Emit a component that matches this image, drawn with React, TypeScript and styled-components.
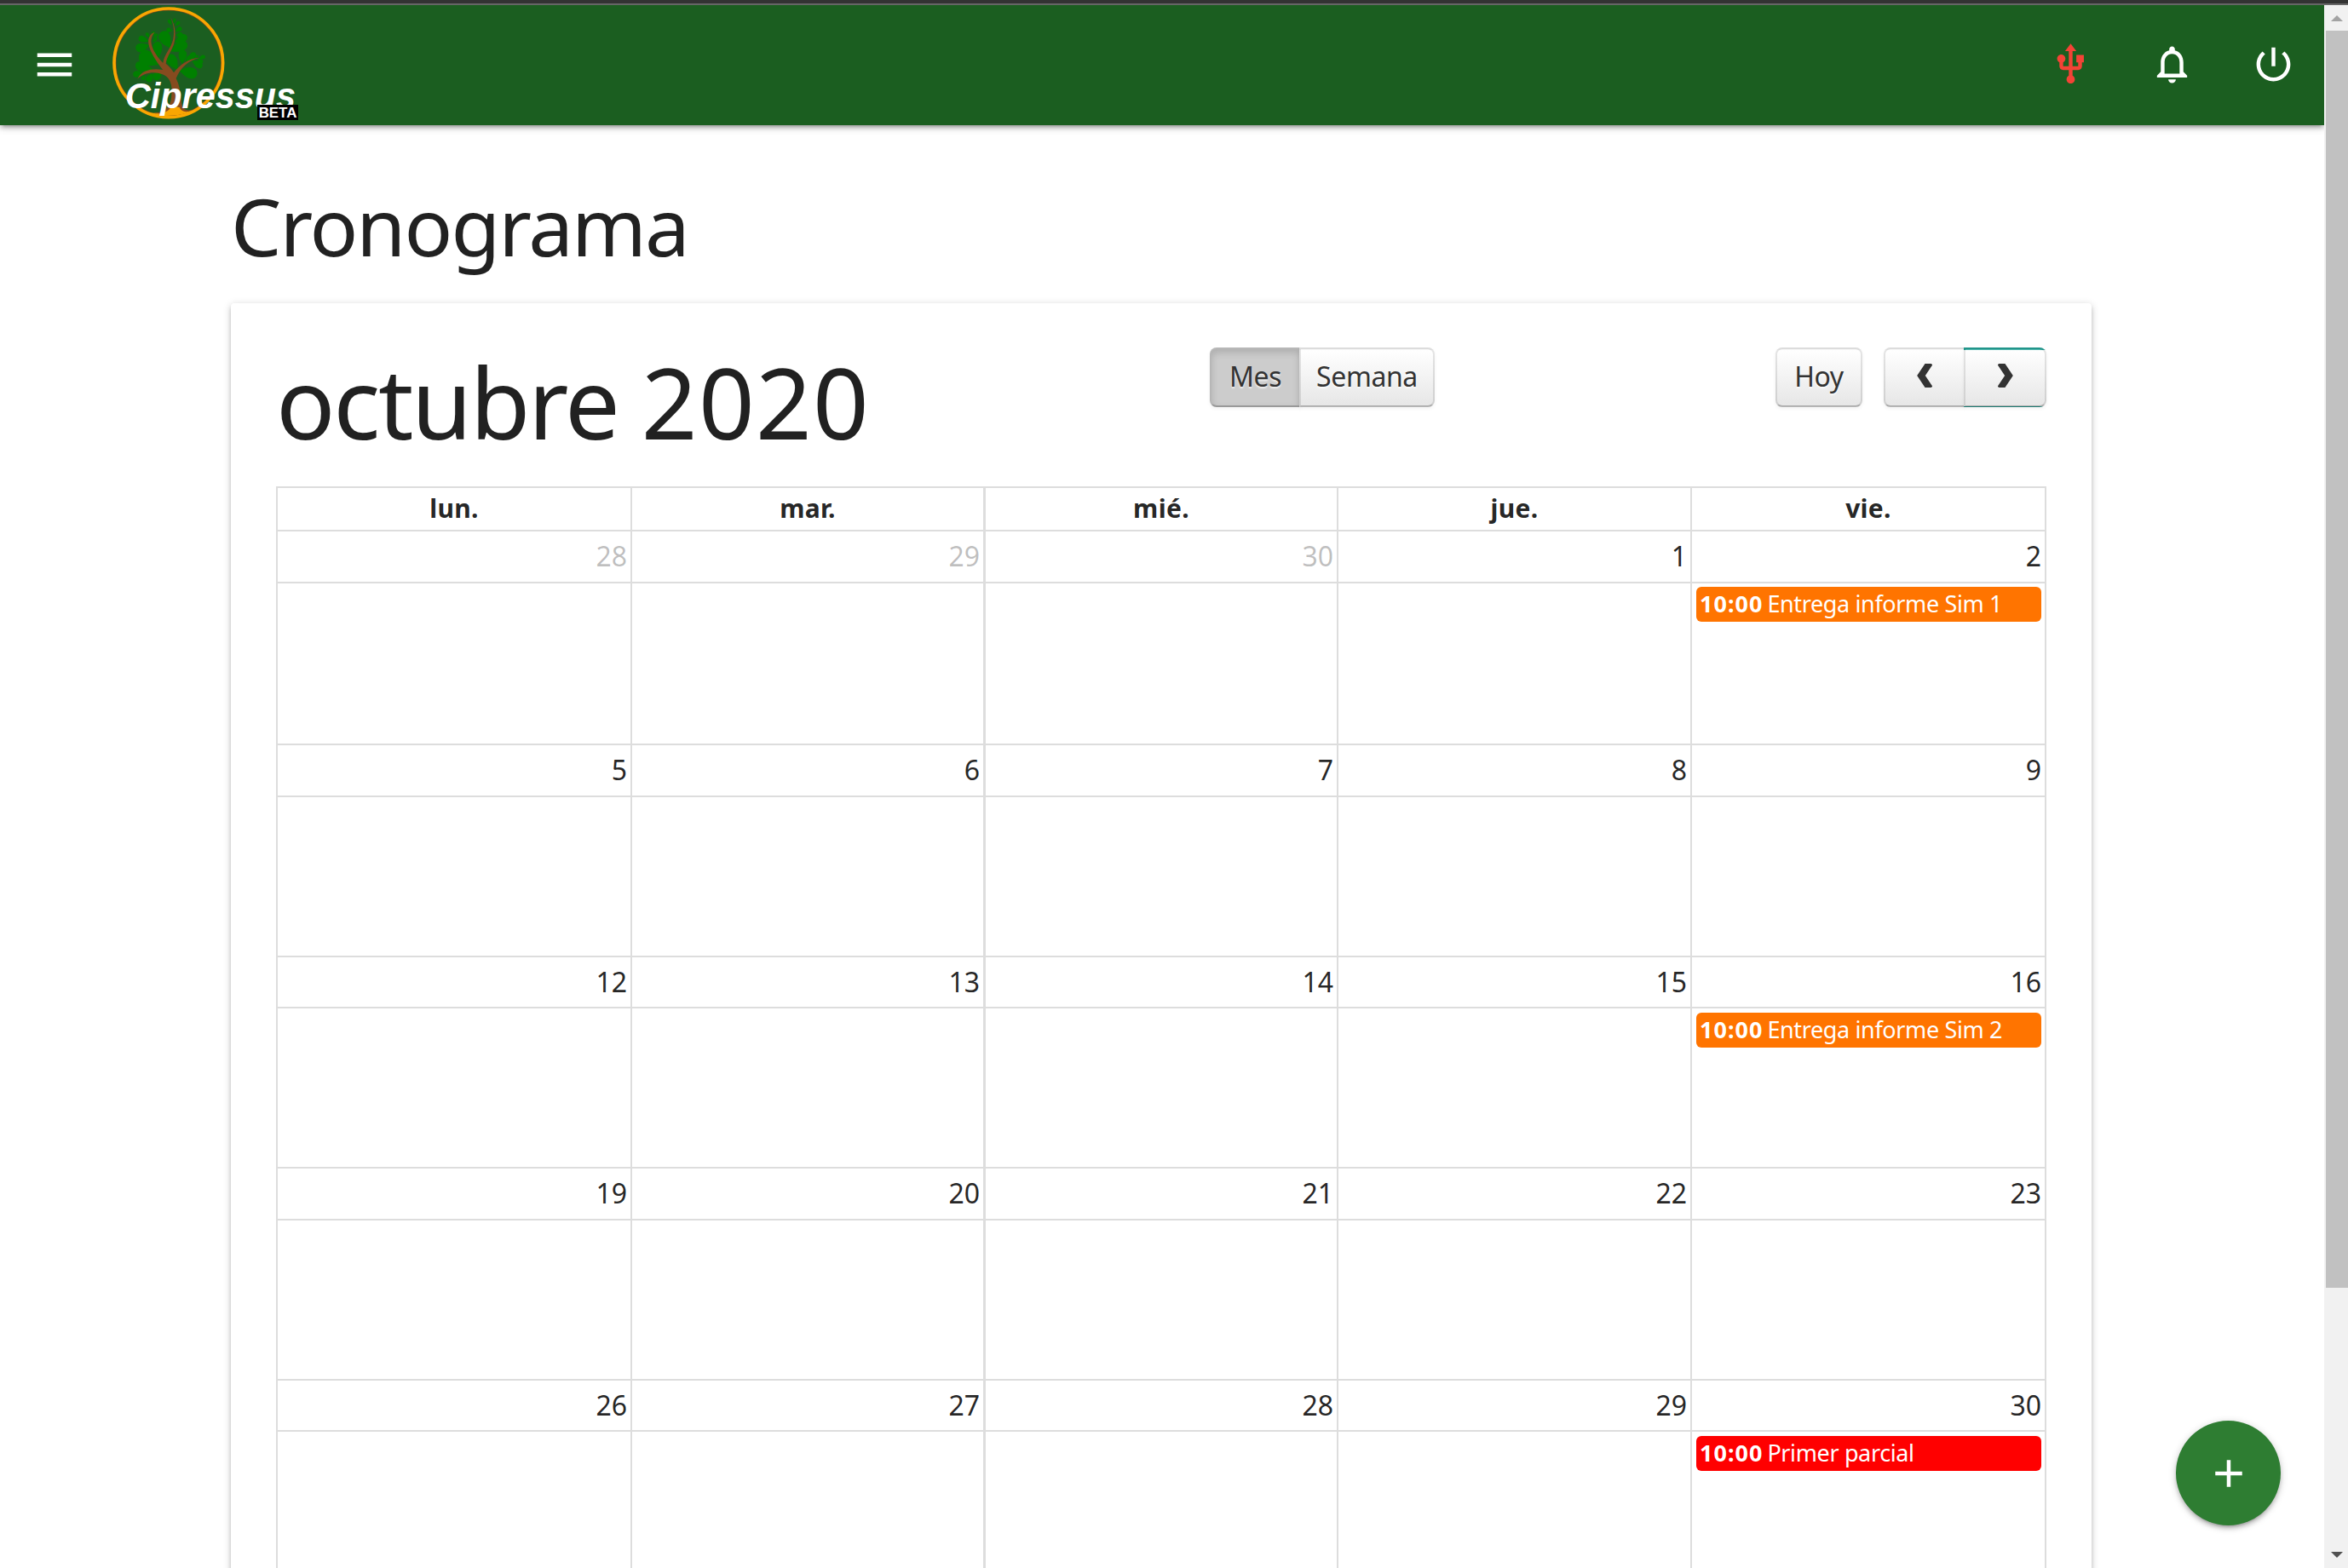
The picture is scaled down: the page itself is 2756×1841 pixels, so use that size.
import React from 'react';
import styled, { createGlobalStyle } from 'styled-components';

const Global = createGlobalStyle`
  *{box-sizing:border-box}
  html,body{margin:0;background:#fff;overflow:hidden}
  body{font-family:"Noto Sans","Open Sans",sans-serif;color:rgba(0,0,0,.87);font-size:31px;line-height:46px}
`;

const Screen = styled.div`width:2756px;height:1841px;overflow:hidden;display:flex;flex-direction:column;`;
const WindowEdge = styled.div`height:6px;flex:none;background:#333;border-bottom:2px solid #666;`;
const Body = styled.div`flex:1;min-height:0;display:flex;`;
const Page = styled.div`flex:1;min-width:0;display:flex;flex-direction:column;overflow:hidden;position:relative;`;

const NavBar = styled.header`
  height:141px;flex:none;background:#1b5e20;color:#fff;display:flex;align-items:flex-start;
  box-shadow:0 4px 4px rgba(0,0,0,.14),0 6px 2px -4px rgba(0,0,0,.12),0 2px 10px rgba(0,0,0,.2);
`;
const MenuButton = styled.button`border:0;background:none;color:inherit;padding:0;margin:43px 41px 0 37px;height:53px;width:54px;`;
const NavLogo = styled.div`height:141px;width:230px;`;
const NavActions = styled.div`margin-left:auto;display:flex;`;
const NavAction = styled.button<{ $alert?: boolean }>`
  border:0;background:none;padding:43px 33px 0;width:119px;height:96px;color:${p => (p.$alert ? '#f44336' : '#fff')};
`;
const Glyph = styled.svg<{ $size: number }>`width:${p => p.$size}px;height:${p => p.$size}px;display:block;fill:currentColor;`;

const Container = styled.main`width:2184px;margin-left:271px;display:flex;flex-direction:column;flex:1;min-height:0;`;
const PageTitle = styled.h3`
  flex:none;margin:67px 0 0;height:142px;font-weight:400;font-size:94px;line-height:102px;letter-spacing:-1.95px;white-space:nowrap;
`;
const Card = styled.section`
  flex:none;height:1600px;border-radius:4px;background:#fff;padding:52px 53px;
  box-shadow:0 4px 4px rgba(0,0,0,.14),0 6px 2px -4px rgba(0,0,0,.12),0 2px 10px rgba(0,0,0,.2);
`;
const Toolbar = styled.div`height:163px;display:grid;grid-template-columns:1096px 664px auto;align-items:start;`;
const MonthTitle = styled.h2`
  margin:5px 0 0;font-weight:400;font-size:115px;line-height:118px;letter-spacing:-2.4px;white-space:nowrap;
`;
const Year = styled.span`letter-spacing:1.3px;`;
const ButtonGroup = styled.div`display:flex;`;
const RightControls = styled.div`display:flex;gap:25px;`;
const CalButton = styled.button<{ $width: number; $active?: boolean; $focus?: boolean }>`
  width:${p => p.$width}px;height:70px;padding:0 0 3px;display:flex;align-items:center;justify-content:center;
  border:2px solid;border-color:rgba(0,0,0,.1) rgba(0,0,0,.1) rgba(0,0,0,.25);
  background-color:${p => (p.$active ? '#ccc' : p.$focus ? '#26a69a' : '#f5f5f5')};
  background-image:${p => (p.$active ? 'none' : 'linear-gradient(to bottom,#fff,#e6e6e6)')};
  background-repeat:repeat-x;background-position:0 1px;
  box-shadow:${p => (p.$active ? 'inset 0 4px 8px rgba(0,0,0,.15),0 2px 4px rgba(0,0,0,.05)' : 'inset 0 2px 0 rgba(255,255,255,.2),0 2px 4px rgba(0,0,0,.05)')};
  color:#333;text-shadow:0 2px 2px rgba(255,255,255,.75);font:400 32px/46px "Noto Sans",sans-serif;letter-spacing:-.4px;
  &:first-child{border-top-left-radius:8px;border-bottom-left-radius:8px}
  &:last-child{border-top-right-radius:8px;border-bottom-right-radius:8px}
  & + &{margin-left:-2px}
`;
const Chevron = styled.svg`width:18px;height:28px;margin-top:-2px;fill:none;stroke:#333;stroke-width:8;`;

const Line = '2px solid #ddd';
const Columns = '416px 414px 415px 415px 418px';
const Weekdays = styled.div`display:grid;grid-template-columns:${Columns};height:51px;border-top:${Line};`;
const Weekday = styled.div`
  border-left:${Line};text-align:center;font-weight:700;font-size:30px;line-height:48px;letter-spacing:.3px;
  &:nth-child(3){border-left-width:3px}
  &:last-child{border-right:${Line}}
`;
const Week = styled.div<{ $height: number; $head: number }>`
  display:grid;grid-template-columns:${Columns};grid-template-rows:${p => p.$head}px 1fr;height:${p => p.$height}px;
`;
const DayCell = styled.div<{ $col: number }>`
  border-top:${Line};border-left:${Line};border-left-width:${p => (p.$col === 2 ? 3 : 2)}px;
  border-right:${p => (p.$col === 4 ? Line : '0')};
`;
const DayNumber = styled(DayCell)<{ $muted?: boolean }>`
  padding-right:4px;text-align:right;font-size:32px;line-height:58px;
  color:${p => (p.$muted ? 'rgba(0,0,0,.26)' : 'inherit')};
`;
const DayBody = styled(DayCell)<{ $top: number }>`padding:${p => p.$top}px 4px 0 5px;`;
const Event = styled.div<{ $color: string }>`
  height:41px;border-radius:6px;background:${p => p.$color};color:#fff;padding-left:4px;
  font-size:27px;line-height:39px;white-space:nowrap;
`;
const EventTime = styled.b`font-weight:700;letter-spacing:1px;margin-right:5px;`;
const EventTitle = styled.span`letter-spacing:-.37px;`;

const Fab = styled.button`
  position:absolute;left:2554px;top:1662px;width:123px;height:123px;border:0;border-radius:50%;padding:0;
  background:#2e7d32;color:#fff;display:flex;align-items:center;justify-content:center;
  box-shadow:0 4px 4px rgba(0,0,0,.14),0 6px 2px -4px rgba(0,0,0,.12),0 2px 10px rgba(0,0,0,.2);
`;

const ScrollTrack = styled.aside`width:28px;flex:none;background:#f1f1f1;display:flex;flex-direction:column;`;
const ScrollArrow = styled.div<{ $down?: boolean }>`
  height:${p => (p.$down ? 24 : 30)}px;padding:${p => (p.$down ? 5 : 12)}px 0 0 8px;color:${p => (p.$down ? '#505050' : '#a3a3a3')};
  margin-top:${p => (p.$down ? 'auto' : '0')};
`;
const Triangle = styled.svg`width:14px;height:7px;display:block;fill:currentColor;`;
const ScrollThumb = styled.div`height:1476px;margin-left:2px;background:#c1c1c1;`;

const ICONS = {
  menu: 'M3 18h18v-2H3v2zm0-5h18v-2H3v2zm0-7v2h18V6H3z',
  usb: 'M15 7v4h1v2h-3V5h2l-3-4-3 4h2v8H8v-2.07c.7-.37 1.2-1.08 1.2-1.93 0-1.21-.99-2.2-2.2-2.2-1.21 0-2.2.99-2.2 2.2 0 .85.5 1.56 1.2 1.93V13c0 1.11.89 2 2 2h3v3.05c-.71.37-1.2 1.1-1.2 1.95 0 1.22.99 2.2 2.2 2.2 1.21 0 2.2-.98 2.2-2.2 0-.85-.49-1.58-1.2-1.95V15h3c1.11 0 2-.89 2-2v-2h1V7h-4z',
  bell: 'M12 22c1.1 0 2-.9 2-2h-4c0 1.1.9 2 2 2zm6-6v-5c0-3.07-1.63-5.64-4.5-6.32V4c0-.83-.67-1.5-1.5-1.5s-1.5.67-1.5 1.5v.68C7.64 5.36 6 7.92 6 11v5l-2 2v1h16v-1l-2-2zm-2 1H8v-6c0-2.48 1.51-4.5 4-4.5s4 2.02 4 4.5v6z',
  power: 'M13 3h-2v10h2V3zm4.83 2.17l-1.42 1.42C17.99 7.86 19 9.81 19 12c0 3.87-3.13 7-7 7s-7-3.13-7-7c0-2.19 1.01-4.14 2.58-5.42L6.17 5.17C4.23 6.82 3 9.26 3 12c0 4.97 4.03 9 9 9s9-4.03 9-9c0-2.74-1.23-5.18-3.17-6.83z',
  add: 'M19 13h-6v6h-2v-6H5v-2h6V5h2v6h6v2z',
};
const Icon = ({ name, size = 53 }: { name: keyof typeof ICONS; size?: number }) => (
  <Glyph $size={size} viewBox="0 0 24 24"><path d={ICONS[name]} /></Glyph>
);

// Each leaf is a drop: tip x, tip y, angle in degrees (0 points right), length, width
const LEAVES: [number, number, number, number, number][] = [
  [604, 88, -120, 22, 12], [612, 84, -80, 20, 9], [618, 92, -50, 22, 12], [606, 108, 190, 20, 16],
  [618, 112, -35, 26, 16], [596, 126, 190, 14, 10], [618, 126, -15, 26, 16],
  [600, 170, -118, 66, 40], [614, 150, -28, 50, 26], [600, 182, -28, 66, 36],
  [526, 132, -125, 20, 12], [534, 128, -60, 20, 12], [524, 146, 200, 38, 22], [526, 158, 162, 50, 30],
  [538, 150, -55, 24, 12], [540, 132, -40, 20, 10],
  [556, 210, -92, 64, 32], [562, 228, 208, 80, 50],
  [542, 246, 192, 66, 30], [524, 248, 208, 52, 26], [506, 256, 168, 38, 22],
  [570, 256, 145, 36, 28], [536, 258, 118, 34, 24], [510, 264, 115, 20, 14],
  [626, 246, -122, 62, 36], [642, 226, -88, 50, 28], [662, 214, -48, 38, 20], [654, 222, -60, 30, 14],
  [700, 206, -20, 24, 14], [694, 208, 30, 24, 13], [676, 214, 30, 42, 24], [630, 248, 12, 66, 38],
  [690, 206, -60, 14, 8],
];
const leafPath = (l: number, w: number) =>
  `M0 0C${l * 0.25} ${-w * 0.25} ${l * 0.4} ${-w * 0.55} ${l * 0.72} ${-w * 0.5}C${l * 1.06} ${-w * 0.45} ${l * 1.1} ${w * 0.4} ${l * 0.76} ${w * 0.5}C${l * 0.42} ${w * 0.58} ${l * 0.25} ${w * 0.2} 0 0Z`;

const Logo = () => (
  <svg width="230" height="141" viewBox="396 18 690 423">
    <circle cx="593.5" cy="221.5" r="187" fill="none" stroke="#7b4a1e" strokeWidth="6" />
    <circle cx="593.5" cy="221.5" r="191.5" fill="none" stroke="#f9a602" strokeWidth="11" />
    <g fill="#008000">
      {LEAVES.map(([x, y, a, l, w], i) => <path key={i} d={leafPath(l, w)} transform={`translate(${x} ${y}) rotate(${a})`} />)}
    </g>
    <path fill="#f9a602" d="M520 396C560 403 590 390 603 372L632 372C640 392 660 397 676 388C650 412 540 416 510 392Z" />
    <path fill="#864b1f" d="M600 60C612 78 622 112 614 148C608 176 588 196 584 224C596 234 606 246 612 256C632 230 664 204 702 204C664 212 634 240 620 276C632 300 636 326 638 352C640 380 650 392 676 388C656 398 638 394 632 378L603 374C596 396 560 404 540 398C580 398 600 376 603 346C606 318 606 296 594 278C576 254 520 244 484 278C500 246 536 240 574 246C552 220 510 160 526 130C530 120 538 115 545 114C514 146 546 192 574 222C578 190 602 172 610 138C616 106 610 80 600 60Z" />
    <g fontFamily="Liberation Sans, Arial, sans-serif" fontWeight="700" fill="#fff">
      <text x="441" y="382" fontSize="129" fontStyle="italic" textLength="600" lengthAdjust="spacingAndGlyphs">Cipressus</text>
      <rect x="906" y="369" width="144" height="54" fill="#000" />
      <text x="911" y="414" fontSize="52" textLength="134" lengthAdjust="spacingAndGlyphs">BETA</text>
    </g>
  </svg>
);

type CalEvent = { title: string; color: string };
const WEEKS: { height: number; head: number; days: number[]; muted?: number; event?: CalEvent }[] = [
  { height: 251, head: 61, days: [28, 29, 30, 1, 2], muted: 3, event: { title: 'Entrega informe Sim 1', color: '#ff7400' } },
  { height: 249, head: 61, days: [5, 6, 7, 8, 9] },
  { height: 248, head: 60, days: [12, 13, 14, 15, 16], event: { title: 'Entrega informe Sim 2', color: '#ff7400' } },
  { height: 249, head: 61, days: [19, 20, 21, 22, 23] },
  { height: 249, head: 60, days: [26, 27, 28, 29, 30], event: { title: 'Primer parcial', color: '#ff0000' } },
];

export default function App() {
  return (
    <Screen>
      <Global />
      <WindowEdge />
      <Body>
        <Page>
          <NavBar>
            <MenuButton><Icon name="menu" size={54} /></MenuButton>
            <NavLogo><Logo /></NavLogo>
            <NavActions>
              <NavAction $alert><Icon name="usb" /></NavAction>
              <NavAction><Icon name="bell" /></NavAction>
              <NavAction><Icon name="power" /></NavAction>
            </NavActions>
          </NavBar>
          <Container>
            <PageTitle>Cronograma</PageTitle>
            <Card>
              <Toolbar>
                <MonthTitle>octubre <Year>2020</Year></MonthTitle>
                <ButtonGroup>
                  <CalButton $width={107} $active>Mes</CalButton>
                  <CalButton $width={159}>Semana</CalButton>
                </ButtonGroup>
                <RightControls>
                  <ButtonGroup><CalButton $width={102}>Hoy</CalButton></ButtonGroup>
                  <ButtonGroup>
                    <CalButton $width={96}><Chevron viewBox="0 0 18 28"><path d="M15-1L5 14L15 29" /></Chevron></CalButton>
                    <CalButton $width={97} $focus><Chevron viewBox="0 0 18 28"><path d="M3-1L13 14L3 29" /></Chevron></CalButton>
                  </ButtonGroup>
                </RightControls>
              </Toolbar>
              <Weekdays>{['lun.', 'mar.', 'mié.', 'jue.', 'vie.'].map(d => <Weekday key={d}>{d}</Weekday>)}</Weekdays>
              {WEEKS.map((w, i) => (
                <Week key={i} $height={w.height} $head={w.head}>
                  {w.days.map((d, j) => <DayNumber key={j} $muted={j < (w.muted ?? 0)} $col={j}>{d}</DayNumber>)}
                  {w.days.map((_, j) => (
                    <DayBody key={j} $col={j} $top={65 - w.head}>
                      {j === 4 && w.event && (
                        <Event $color={w.event.color}><EventTime>10:00</EventTime><EventTitle>{w.event.title}</EventTitle></Event>
                      )}
                    </DayBody>
                  ))}
                </Week>
              ))}
            </Card>
          </Container>
          <Fab><Icon name="add" size={54} /></Fab>
        </Page>
        <ScrollTrack>
          <ScrollArrow><Triangle viewBox="0 0 14 7"><path d="M0 7L7 0L14 7Z" /></Triangle></ScrollArrow>
          <ScrollThumb />
          <ScrollArrow $down><Triangle viewBox="0 0 14 7"><path d="M0 0L7 7L14 0Z" /></Triangle></ScrollArrow>
        </ScrollTrack>
      </Body>
    </Screen>
  );
}
